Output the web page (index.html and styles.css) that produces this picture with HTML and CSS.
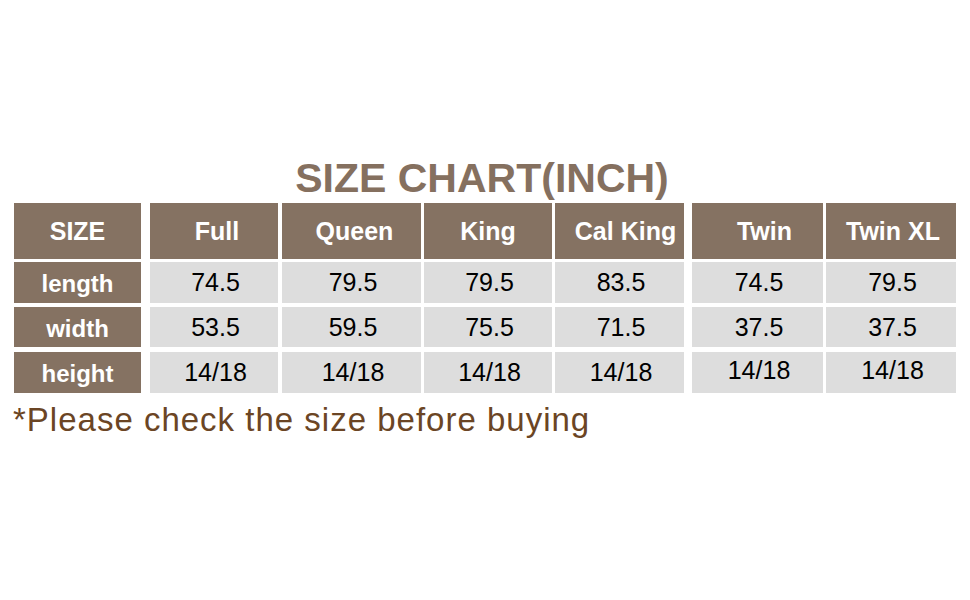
FILE: index.html
```html
<!DOCTYPE html>
<html>
<head>
<meta charset="utf-8">
<link rel="stylesheet" href="styles.css">
</head>
<body>
<div class="page">
  <h1 class="title">SIZE CHART(INCH)</h1>
  <div class="chart">
    <div class="row head">
      <div class="cell">SIZE</div>
      <div class="cell s3">Full</div>
      <div class="cell s3">Queen</div>
      <div class="cell">King</div>
      <div class="cell s6">Cal King</div>
      <div class="cell s7">Twin</div>
      <div class="cell s2">Twin XL</div>
    </div>
    <div class="row data r1">
      <div class="cell label">length</div>
      <div class="cell">74.5</div>
      <div class="cell">79.5</div>
      <div class="cell">79.5</div>
      <div class="cell">83.5</div>
      <div class="cell">74.5</div>
      <div class="cell">79.5</div>
    </div>
    <div class="row data r2">
      <div class="cell label">width</div>
      <div class="cell">53.5</div>
      <div class="cell">59.5</div>
      <div class="cell">75.5</div>
      <div class="cell">71.5</div>
      <div class="cell">37.5</div>
      <div class="cell">37.5</div>
    </div>
    <div class="row data r3">
      <div class="cell label">height</div>
      <div class="cell">14/18</div>
      <div class="cell">14/18</div>
      <div class="cell">14/18</div>
      <div class="cell">14/18</div>
      <div class="cell up">14/18</div>
      <div class="cell up">14/18</div>
    </div>
  </div>
  <p class="note">*Please check the size before buying</p>
</div>
</body>
</html>
```

FILE: styles.css
```css
html, body {
  margin: 0;
  padding: 0;
  background: #ffffff;
}

.page {
  width: 970px;
  height: 600px;
  font-family: "Liberation Sans", Arial, sans-serif;
  padding-top: 154px;
  box-sizing: border-box;
}

.title {
  margin: 0 0 1px 0;
  padding-right: 6px;
  text-align: center;
  font-size: 41px;
  line-height: 48px;
  font-weight: bold;
  color: #85705f;
}

.chart {
  display: flex;
  flex-direction: column;
  padding-left: 14px;
}

.row {
  display: flex;
}

.row.head { height: 56px; }
.row.r1 { height: 41px; margin-top: 3px; }
.row.r2 { height: 40px; margin-top: 4px; }
.row.r3 { height: 41px; margin-top: 5px; }

.cell {
  display: flex;
  align-items: center;
  justify-content: center;
  box-sizing: border-box;
  white-space: nowrap;
}

.row > .cell:nth-child(1) { width: 127px; }
.row > .cell:nth-child(2) { width: 128px; margin-left: 9px; }
.row > .cell:nth-child(3) { width: 139px; margin-left: 4px; }
.row > .cell:nth-child(4) { width: 128px; margin-left: 3px; }
.row > .cell:nth-child(5) { width: 129px; margin-left: 3px; }
.row > .cell:nth-child(6) { width: 131px; margin-left: 8px; }
.row > .cell:nth-child(7) { width: 130px; margin-left: 3px; }

.head .cell {
  background: #857262;
  color: #ffffff;
  font-weight: bold;
  font-size: 25px;
}

.head .s2 { padding-left: 4px; }
.head .s3 { padding-left: 6px; }
.head .s6 { padding-left: 12px; }
.head .s7 { padding-left: 14px; }

.data .cell {
  background: #dddddd;
  color: #000000;
  font-size: 25px;
  padding-left: 3px;
}

.data .cell.label {
  background: #857262;
  color: #ffffff;
  font-weight: bold;
  font-size: 24px;
  padding-left: 0;
  padding-top: 3px;
}

.data .cell.up {
  padding-bottom: 4px;
}

.note {
  margin: 7px 0 0 0;
  padding-left: 13px;
  font-size: 33px;
  line-height: 40px;
  letter-spacing: 1px;
  color: #6b4524;
}
```
